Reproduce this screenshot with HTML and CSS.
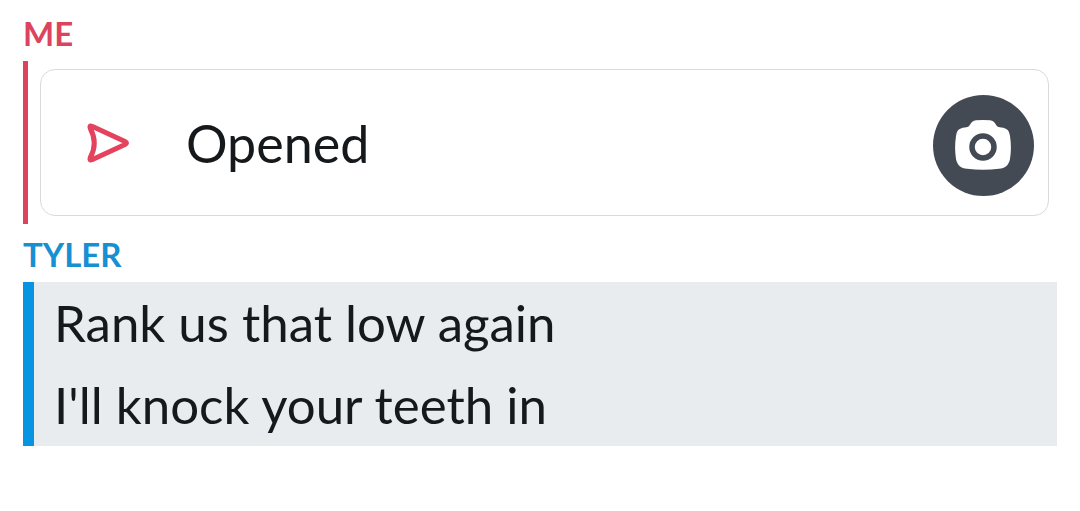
FILE: index.html
```html
<!DOCTYPE html>
<html lang="en">
<head>
<meta charset="utf-8">
<meta name="viewport" content="width=device-width, initial-scale=1">
<title>Chat</title>
<link rel="stylesheet" href="styles.css">
</head>
<body>
<main class="chat">
  <section class="group group-me">
    <h2 class="sender">ME</h2>
    <div class="snap-row">
      <div class="snap-card">
        <svg class="snap-arrow" viewBox="0 0 44 42" aria-hidden="true">
          <path d="M6 4.300 Q3 3.200 4.300 6.500 C9.500 16 9.500 26 4.300 35.500 Q3 38.800 6 37.700 L39 22.500 Q42 21 39 19.500 Z"/>
        </svg>
        <span class="snap-status">Opened</span>
        <button class="camera" type="button" aria-label="Open camera">
          <svg class="camera-icon" viewBox="0 0 57 50" aria-hidden="true">
            <path fill="#fff" d="M21 0.300 Q28 -.3 35 0.300 C41 1 40 6 43.500 7 C51 8 54 9 55 16 Q56.800 28 55 39 C53.500 46 50 48 44 48.800 Q28 50.500 12 48.800 C6 48 2.500 46 1 39 Q-.8 28 1 16 C2 9 5 8 12.500 7 C16 6 15 1 21 0.300 Z"/>
            <circle cx="28" cy="27" r="11" fill="#fff" stroke="#444a54" stroke-width="5.500"/>
          </svg>
        </button>
      </div>
    </div>
  </section>
  <section class="group group-friend">
    <h2 class="sender">TYLER</h2>
    <div class="messages">
      <p class="message">Rank us that low again</p>
      <p class="message">I'll knock your teeth in</p>
    </div>
  </section>
</main>
</body>
</html>
```
FILE: styles.css
```css
* {
  box-sizing: border-box;
}

body {
  margin: 0;
  background: #fff;
  color: #16191c;
  font-family: Lato, "Open Sans", sans-serif;
}

.chat {
  padding: 12px 23px 0;
}

.sender {
  margin: 0 0 7px;
  font-size: 33px;
  line-height: 42px;
  font-weight: 700;
}

.group-me .sender {
  color: #dd435e;
}

.group-friend {
  margin-top: 9px;
}

.group-friend .sender {
  color: #1690d2;
}

.snap-row {
  padding: 8px 8px 8px 12px;
  border-left: 5px solid #dd435e;
}

.snap-card {
  display: flex;
  align-items: center;
  height: 147px;
  padding: 0 14px 0 45px;
  border: 1px solid #d9dadb;
  border-radius: 15px;
}

.snap-arrow {
  width: 44px;
  height: 42px;
  fill: none;
  stroke: #e5425e;
  stroke-width: 5;
  stroke-linejoin: round;
}

.snap-status {
  flex: 1;
  margin-left: 56px;
  font-size: 52px;
  line-height: 82px;
}

.camera {
  display: grid;
  place-items: center;
  width: 101px;
  height: 101px;
  margin-top: 5px;
  padding: 0;
  border: 0;
  border-radius: 50%;
  background: #444a54;
}

.camera-icon {
  width: 57px;
  height: 50px;
}

.messages {
  padding-left: 20px;
  border-left: 11px solid #0795e3;
  background: #e8ecef;
}

.message {
  margin: 0;
  font-size: 51px;
  line-height: 82px;
}
```
